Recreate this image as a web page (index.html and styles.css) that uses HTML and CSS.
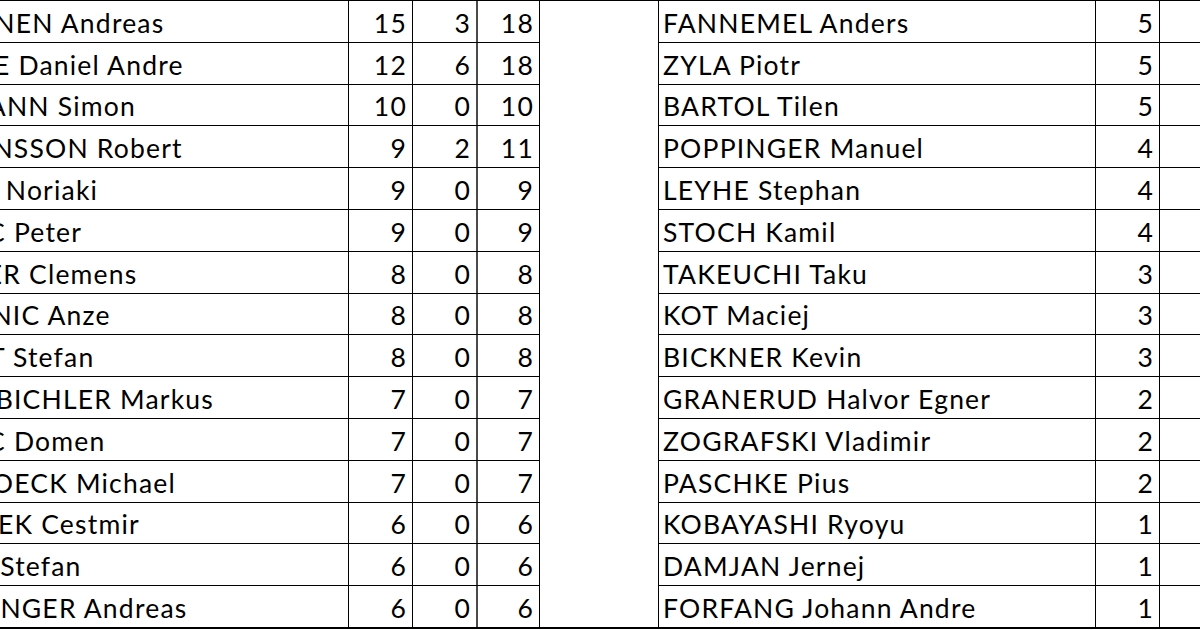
FILE: index.html
```html
<!DOCTYPE html>
<html>
<head>
<meta charset="utf-8">
<link rel="stylesheet" href="styles.css">
</head>
<body>
<div class="sheet">
  <div class="grid">
    <div class="tbl left">
      <div class="row"><div class="c name">STJERNEN Andreas</div><div class="c n1">15</div><div class="c n2">3</div><div class="c n3">18</div></div>
      <div class="row"><div class="c name">TANDE Daniel Andre</div><div class="c n1">12</div><div class="c n2">6</div><div class="c n3">18</div></div>
      <div class="row"><div class="c name">AMMANN Simon</div><div class="c n1">10</div><div class="c n2">0</div><div class="c n3">10</div></div>
      <div class="row"><div class="c name">JOHANSSON Robert</div><div class="c n1">9</div><div class="c n2">2</div><div class="c n3">11</div></div>
      <div class="row"><div class="c name">KASAI Noriaki</div><div class="c n1">9</div><div class="c n2">0</div><div class="c n3">9</div></div>
      <div class="row"><div class="c name">PREVC Peter</div><div class="c n1">9</div><div class="c n2">0</div><div class="c n3">9</div></div>
      <div class="row"><div class="c name">AIGNER Clemens</div><div class="c n1">8</div><div class="c n2">0</div><div class="c n3">8</div></div>
      <div class="row"><div class="c name">SEMENIC Anze</div><div class="c n1">8</div><div class="c n2">0</div><div class="c n3">8</div></div>
      <div class="row"><div class="c name">KRAFT Stefan</div><div class="c n1">8</div><div class="c n2">0</div><div class="c n3">8</div></div>
      <div class="row"><div class="c name">EISENBICHLER Markus</div><div class="c n1">7</div><div class="c n2">0</div><div class="c n3">7</div></div>
      <div class="row"><div class="c name">PREVC Domen</div><div class="c n1">7</div><div class="c n2">0</div><div class="c n3">7</div></div>
      <div class="row"><div class="c name">HAYBOECK Michael</div><div class="c n1">7</div><div class="c n2">0</div><div class="c n3">7</div></div>
      <div class="row"><div class="c name">KOZISEK Cestmir</div><div class="c n1">6</div><div class="c n2">0</div><div class="c n3">6</div></div>
      <div class="row"><div class="c name">HULA Stefan</div><div class="c n1">6</div><div class="c n2">0</div><div class="c n3">6</div></div>
      <div class="row"><div class="c name">WELLINGER Andreas</div><div class="c n1">6</div><div class="c n2">0</div><div class="c n3">6</div></div>
    </div>
    <div class="gap"></div>
    <div class="tbl right">
      <div class="row"><div class="c rname">FANNEMEL Anders</div><div class="c rn">5</div><div class="c rx"></div></div>
      <div class="row"><div class="c rname">ZYLA Piotr</div><div class="c rn">5</div><div class="c rx"></div></div>
      <div class="row"><div class="c rname">BARTOL Tilen</div><div class="c rn">5</div><div class="c rx"></div></div>
      <div class="row"><div class="c rname">POPPINGER Manuel</div><div class="c rn">4</div><div class="c rx"></div></div>
      <div class="row"><div class="c rname">LEYHE Stephan</div><div class="c rn">4</div><div class="c rx"></div></div>
      <div class="row"><div class="c rname">STOCH Kamil</div><div class="c rn">4</div><div class="c rx"></div></div>
      <div class="row"><div class="c rname">TAKEUCHI Taku</div><div class="c rn">3</div><div class="c rx"></div></div>
      <div class="row"><div class="c rname">KOT Maciej</div><div class="c rn">3</div><div class="c rx"></div></div>
      <div class="row"><div class="c rname">BICKNER Kevin</div><div class="c rn">3</div><div class="c rx"></div></div>
      <div class="row"><div class="c rname">GRANERUD Halvor Egner</div><div class="c rn">2</div><div class="c rx"></div></div>
      <div class="row"><div class="c rname">ZOGRAFSKI Vladimir</div><div class="c rn">2</div><div class="c rx"></div></div>
      <div class="row"><div class="c rname">PASCHKE Pius</div><div class="c rn">2</div><div class="c rx"></div></div>
      <div class="row"><div class="c rname">KOBAYASHI Ryoyu</div><div class="c rn">1</div><div class="c rx"></div></div>
      <div class="row"><div class="c rname">DAMJAN Jernej</div><div class="c rn">1</div><div class="c rx"></div></div>
      <div class="row"><div class="c rname">FORFANG Johann Andre</div><div class="c rn">1</div><div class="c rx"></div></div>
    </div>
  </div>
</div>
</body>
</html>
```

FILE: styles.css
```css
html, body {
  margin: 0;
  padding: 0;
  background: #fff;
}
body {
  font-family: Lato, "Liberation Sans", sans-serif;
  font-size: 26.5px;
  letter-spacing: 1.2px;
  color: #000;
}
.sheet {
  width: 1200px;
  height: 630px;
  overflow: hidden;
}
.grid {
  display: flex;
  width: 1500px;
  margin-left: -89px;
  border-top: 1px solid #000;
  border-bottom: 2px solid #000;
}
.tbl {
  display: flex;
  flex-direction: column;
}
.row {
  display: flex;
  height: 41.8px;
  box-sizing: border-box;
  border-bottom: 1px solid #000;
}
.row:last-child {
  border-bottom: 0;
  height: 40.8px;
}
.c {
  box-sizing: border-box;
  display: flex;
  align-items: center;
  padding-top: 3px;
  white-space: nowrap;
  overflow: hidden;
}
.name {
  width: 438px;
  padding-left: 6px;
  border-right: 1px solid #000;
}
.n1, .n2, .n3, .rn {
  justify-content: flex-end;
  padding-right: 5px;
}
.n1 {
  width: 64px;
  border-right: 1px solid #000;
}
.n2 {
  width: 65px;
  border-right: 2px solid #4a4a4a;
}
.n3 {
  width: 62px;
  border-right: 1px solid #000;
}
.gap {
  width: 118px;
  flex: none;
}
.rname {
  width: 438px;
  padding-left: 4px;
  border-left: 1px solid #000;
  border-right: 1px solid #000;
}
.rn {
  width: 64px;
  border-right: 1px solid #000;
}
.rx {
  width: 200px;
}
```
